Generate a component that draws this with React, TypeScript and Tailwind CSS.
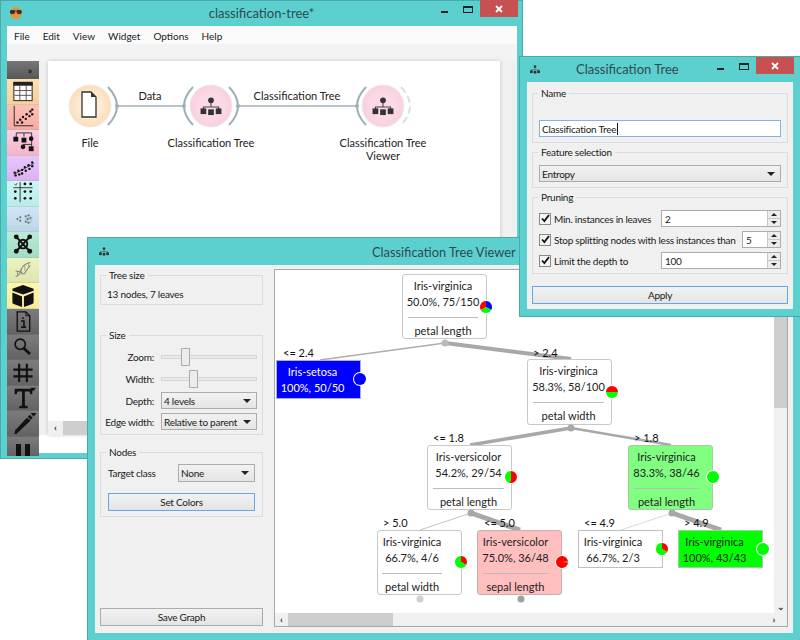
import type { ReactNode } from "react";

const TEAL = "bg-[#5cd0cf]";

// small org-chart glyph used in window titles and widget circles
function TreeGlyph({ className }: { className: string }) {
  return (
    <svg className={className} viewBox="0 0 24 20" fill="#333">
      <circle cx="12" cy="3.5" r="3" />
      <path d="M12 5v6M4 13v-2.5h16V13" stroke="#444" strokeWidth="1.1" fill="none" />
      <rect x="1" y="12" width="6" height="6" />
      <rect x="9" y="13" width="6" height="6" />
      <rect x="17" y="12" width="6" height="6" />
    </svg>
  );
}

function WinControls() {
  return (
    <div className="flex h-[18px] items-start">
      <div className="mt-[11px] h-[2px] w-[7px] bg-[#222]" />
      <div className="ml-[15px] mt-[6px] h-[7px] w-[10px] border border-t-2 border-[#222]" />
      <div className="ml-[7px] flex h-[17px] w-[38px] items-center justify-center bg-[#c75050]">
        <svg className="h-[8px] w-[8px]" viewBox="0 0 8 8" stroke="#fff" strokeWidth="1.8">
          <path d="M1 1l6 6M7 1L1 7" />
        </svg>
      </div>
    </div>
  );
}

function Group({ label, className, children }: { label: string; className: string; children?: ReactNode }) {
  return (
    <div className={`relative border border-[#dcdcdc] ${className}`}>
      <span className="absolute left-[5px] top-[-8px] bg-[#f0f0f0] px-[3px] text-[#1a1a1a]">{label}</span>
      {children}
    </div>
  );
}

function Select({ value, className }: { value: string; className: string }) {
  return (
    <div className={`flex items-center justify-between whitespace-nowrap border border-[#acacac] bg-linear-to-b from-[#f2f2f2] to-[#e4e4e4] pl-[2px] pr-[5px] text-[#1a1a1a] ${className}`}>
      <span>{value}</span>
      <span className="h-0 w-0 border-x-[4px] border-t-[4px] border-x-transparent border-t-[#222]" />
    </div>
  );
}

function Button({ label, focus, className }: { label: string; focus?: boolean; className: string }) {
  return (
    <div className={`flex items-center justify-center border bg-linear-to-b from-[#f2f2f2] to-[#e4e4e4] text-[#1a1a1a] ${focus ? "border-[#64a8ea]" : "border-[#acacac]"} ${className}`}>
      {label}
    </div>
  );
}

function Slider({ handle }: { handle: string }) {
  return (
    <div className="relative h-[18px] w-[96px]">
      <div className="absolute left-0 right-0 top-[7px] h-[4px] border border-[#d6d6d6] bg-[#e9e9e9]" />
      <div className={`absolute top-0 h-[18px] w-[9px] border border-[#acacac] bg-[#ececec] ${handle}`} />
    </div>
  );
}

function Check({ label }: { label: string }) {
  return (
    <div className="flex items-center whitespace-nowrap">
      <div className="flex h-[12px] w-[12px] items-center justify-center border border-[#8a8a8a] bg-[#f4f4f4]">
        <svg className="h-[9px] w-[9px]" viewBox="0 0 9 9" fill="none" stroke="#111" strokeWidth="1.8">
          <path d="M1 4.5l2.4 2.6L8 1" />
        </svg>
      </div>
      <span className="ml-[3px] text-[#1a1a1a]">{label}</span>
    </div>
  );
}

function Spin({ value, className }: { value: string; className: string }) {
  return (
    <div className={`flex h-[17px] items-stretch border border-[#acacac] bg-white pl-[3px] text-[#1a1a1a] ${className}`}>
      <span className="flex-1 leading-[16px]">{value}</span>
      <div className="flex w-[13px] flex-col border-l border-[#c8c8c8] bg-[#ededed]">
        <div className="flex flex-1 items-center justify-center border-b border-[#c8c8c8]">
          <span className="h-0 w-0 border-x-[3px] border-b-[3px] border-x-transparent border-b-[#222]" />
        </div>
        <div className="flex flex-1 items-center justify-center">
          <span className="h-0 w-0 border-x-[3px] border-t-[3px] border-x-transparent border-t-[#222]" />
        </div>
      </div>
    </div>
  );
}

/* ---- toolbox icons ---- */
const dots = (pts: number[][], r = 1.6) => pts.map(([x, y], i) => <circle key={i} cx={x} cy={y} r={r} />);

const toolIcons: ReactNode[] = [
  <g key="table">
    <rect x="6.5" y="3.5" width="19" height="19" fill="#fff" stroke="#222" />
    <rect x="6" y="3" width="20" height="4" fill="#222" />
    <path d="M12.7 7v15M19.3 7v15M7 12h18M7 17h18" stroke="#555" />
  </g>,
  <g key="scatter">
    <path d="M6.500 1v21.500H27" fill="none" stroke="#222" strokeWidth="1" />
    {dots([[10, 19], [13, 16], [15, 19], [16, 13], [19, 15], [20, 10], [23, 12], [24, 7], [26, 10], [26, 5]], 1.3)}
  </g>,
  <g key="tree">
    <path d="M9 7V3h16v4M17 3v4M25 7v8M16 15h9v3" fill="none" stroke="#333" strokeWidth="1" />
    <rect x="6" y="7" width="5" height="5" />
    <rect x="14.500" y="8" width="5" height="5" />
    <circle cx="24.500" cy="9" r="2.400" />
    <circle cx="16" cy="17.500" r="2.400" />
    <rect x="22" y="17" width="5" height="5" />
  </g>,
  <g key="regress">
    <path d="M6 20L28 8" stroke="#222" strokeWidth="0.8" />
    {dots([[7, 18], [8, 21], [11, 16], [12, 20], [15, 15], [15, 19], [18, 12], [19, 16], [22, 10], [23, 14], [26, 7], [26, 11]], 1.3)}
  </g>,
  <g key="matrix">
    <path d="M6 7h20M13 1v21" stroke="#222" strokeWidth="0.9" />
    {dots([[18, 3], [24, 3], [18, 11], [24, 11], [18, 18], [24, 18], [8, 11], [8, 18]], 1.4)}
    <path d="M7 3l1.500 1.500L10 2" fill="none" stroke="#222" strokeWidth="0.7" />
  </g>,
  <g key="cluster" opacity="0.55">
    <circle cx="22" cy="13" r="4.500" fill="#9aa" opacity="0.5" />
    {dots([[10, 13], [13, 11], [13, 15], [19, 10], [22, 9], [21, 13], [24, 12], [19, 16], [22, 17]], 1.100)}
  </g>,
  <g key="network">
    <path d="M9 5l14 15M23 5L9 20" stroke="#111" strokeWidth="2" />
    <circle cx="16" cy="12.500" r="4.500" fill="none" stroke="#111" strokeWidth="2" />
    {dots([[9, 5], [23, 5], [9, 20], [23, 20]], 2.500)}
  </g>,
  <g key="dna" fill="none" stroke="#777" strokeWidth="1.100" opacity="0.85">
    <path d="M8 20c6-1 5-9 9-12s6-3 7-3" />
    <path d="M8 14c4 0 6 1 8 3s4-6 8-9" />
    <path d="M10 14v5M14 11v7M18 7v7M22 5v4" strokeWidth="0.800" />
  </g>,
  <g key="cube">
    <path d="M16 2l11 4v2l-11 4L5 8V6z" />
    <path d="M5 10l10 4v11L7 22c-1.500-.5-2-1-2-2zM27 10l-10 4v11l8-3c1.500-.5 2-1 2-2z" />
  </g>,
  <g key="info">
    <path d="M10 3h9l4 4v16H10z" fill="none" stroke="#111" strokeWidth="1.400" />
    <path d="M19 3v4h4" fill="none" stroke="#111" />
    <path d="M16 8.500v2M14 12.500h3v6h1.500M14 19h5" fill="none" stroke="#111" strokeWidth="1.600" />
  </g>,
  <g key="search" fill="none" stroke="#111">
    <circle cx="13" cy="10" r="5.500" strokeWidth="1.800" />
    <path d="M17 14.500l6.500 6" strokeWidth="3" />
  </g>,
  <g key="hash" stroke="#111" strokeWidth="2.200">
    <path d="M12 4v19M20 4v19M6 10h20M6 17h20" />
  </g>,
  <g key="text">
    <path d="M7 3h19v6h-2l-1-3h-5v15l3 1v2H12v-2l3-1V6h-5L9 9H7z" />
    <path d="M30 2h-6l3 4z" />
  </g>,
  <g key="pen">
    <path d="M9 24l-2 0 1-4L20 7l4 3z" />
    <path d="M21 6l2-2 3 3-2 2z" />
    <path d="M30 2h-6l3 4z" />
  </g>,
];

const toolRows = [
  { bg: "from-[#fde0b4] to-[#f9cf98]", h: "h-[26px]" },
  { bg: "from-[#fdc0b6] to-[#f8aaa3]", h: "h-[25px]" },
  { bg: "from-[#fdcfe2] to-[#f5b3cb]", h: "h-[26px]" },
  { bg: "from-[#e7c6fa] to-[#dcb2f2]", h: "h-[25px]" },
  { bg: "from-[#ccf7f2] to-[#b8ecea]", h: "h-[26px]" },
  { bg: "from-[#d0e6f6] to-[#bdd6e6]", h: "h-[25px]" },
  { bg: "from-[#b9ecd8] to-[#a2dcc4]", h: "h-[26px]" },
  { bg: "from-[#ecf3c0] to-[#dde6ae]", h: "h-[25px]" },
  { bg: "from-[#fdf6ae] to-[#f7ec98]", h: "h-[26px]" },
  { bg: "from-[#7c7c7c] to-[#636363]", h: "h-[26px]" },
  { bg: "from-[#7c7c7c] to-[#636363]", h: "h-[25px]" },
  { bg: "from-[#7c7c7c] to-[#636363]", h: "h-[26px]" },
  { bg: "from-[#7c7c7c] to-[#636363]", h: "h-[25px]" },
  { bg: "from-[#7c7c7c] to-[#636363]", h: "h-[26px]" },
];

function Toolbox() {
  return (
    <div className="flex h-full w-[32px] flex-col overflow-hidden">
      <div className="flex h-[18px] shrink-0 items-center justify-end bg-linear-to-b from-[#777] to-[#585858] pr-[7px] text-[9px] font-bold leading-none text-[#111]">»</div>
      {toolRows.map((row, i) => (
        <div key={i} className={`shrink-0 border-b border-[#0000001f] bg-linear-to-b ${row.bg} ${row.h}`}>
          <svg className="h-full w-full" viewBox="0 0 32 26" fill="#111">{toolIcons[i]}</svg>
        </div>
      ))}
      <div className="flex flex-1 justify-center gap-[4px] bg-linear-to-b from-[#7c7c7c] to-[#636363] pt-[7px]">
        <div className="h-[12px] w-[5px] bg-[#111]" />
        <div className="h-[12px] w-[5px] bg-[#111]" />
      </div>
    </div>
  );
}

/* ---- workflow canvas (free canvas, coordinates are the content) ---- */
function WidgetNode({ cx, fill, inner }: { cx: number; fill: string; inner: string }) {
  return (
    <g>
      <defs>
        <radialGradient id={`w${cx}`}>
          <stop offset="0.55" stopColor={inner} />
          <stop offset="1" stopColor={fill} />
        </radialGradient>
      </defs>
      <circle cx={cx} cy="45" r="21" fill={`url(#w${cx})`} stroke="#ececec" strokeWidth="1" />
    </g>
  );
}

function Workflow() {
  const arcL = (x: number) => `M${x + 9} 26q-18 19 0 38`;
  const arcR = (x: number) => `M${x - 9} 26q18 19 0 38`;
  return (
    <div className="relative h-[374px] w-[452px] bg-white shadow-[0_0_4px_#0003]">
      <svg className="absolute inset-0" width="452" height="374" viewBox="0 0 452 374" fill="none">
        <path d="M70 45H136M190 45H310" stroke="#a3b3ba" strokeWidth="1.500" />
        <WidgetNode cx={42} fill="#fcdcb6" inner="#fdebd5" />
        <WidgetNode cx={163} fill="#f9cfdf" inner="#fbd9e6" />
        <WidgetNode cx={335} fill="#f9cfdf" inner="#fbd9e6" />
        <g stroke="#9db0b8" strokeWidth="2">
          <path d={arcR(69)} />
          <path d={arcL(136)} />
          <path d={arcR(190)} />
          <path d={arcL(309)} />
        </g>
        <g fill="#9db0b8">
          <circle cx="69" cy="45" r="2" />
          <circle cx="136" cy="45" r="2" />
          <circle cx="190" cy="45" r="2" />
          <circle cx="309" cy="45" r="2" />
        </g>
        <path d={arcR(362)} stroke="#d6e0e4" strokeWidth="2" strokeDasharray="7 4" />
        <path d="M34 31h9l5 5v20H34z" fill="#fff" stroke="#333" strokeWidth="1.300" />
        <path d="M43 31v5h5z" fill="#333" />
      </svg>
      <TreeGlyph className="absolute left-[151px] top-[36px] h-[19px] w-[24px]" />
      <TreeGlyph className="absolute left-[323px] top-[36px] h-[19px] w-[24px]" />
      <span className="absolute left-[84px] top-[28px] w-[36px] text-center">Data</span>
      <span className="absolute left-[189px] top-[28px] w-[120px] text-center">Classification Tree</span>
      <span className="absolute left-[12px] top-[75px] w-[60px] text-center">File</span>
      <span className="absolute left-[103px] top-[75px] w-[120px] text-center">Classification Tree</span>
      <span className="absolute left-[275px] top-[75px] w-[120px] text-center leading-[13px]">Classification Tree Viewer</span>
      <div className="absolute bottom-0 left-0 flex h-[14px] w-full bg-[#f0f0f0]">
        <span className="w-[15px] text-center text-[10px] font-bold leading-[13px] text-[#333]">‹</span>
        <div className="flex-1 bg-[#cdcdcd]" />
      </div>
    </div>
  );
}

/* ---- tree viewer ---- */
type Slice = [string, number];

function Pie({ slices, start = -90, cx, cy }: { slices: Slice[]; start?: number; cx: number; cy: number }) {
  let a = start;
  return (
    <g>
      <circle cx={cx} cy={cy} r="7" fill="#fff" />
      {slices.map(([color, deg], i) => {
        if (deg >= 360) return <circle key={i} cx={cx} cy={cy} r="6" fill={color} />;
        const a0 = (a * Math.PI) / 180;
        a += deg;
        const a1 = (a * Math.PI) / 180;
        const d = `M${cx} ${cy}L${cx + 6 * Math.cos(a0)} ${cy + 6 * Math.sin(a0)}A6 6 0 ${deg > 180 ? 1 : 0} 1 ${cx + 6 * Math.cos(a1)} ${cy + 6 * Math.sin(a1)}Z`;
        return <path key={i} d={d} fill={color} />;
      })}
    </g>
  );
}

const nodes = [
  { pos: "left-[127px] top-[4px] h-[65px] pl-[5px] pr-[8px] rounded-[3px] bg-white border-[#c8c8c8]", lines: ["Iris-virginica", "50.0%, 75/150"], attr: "petal length" },
  { pos: "left-[1px] top-[90px] h-[39px] pl-[5px] pr-[17px] bg-[#0000ff] border-[#aaaaee] text-white", lines: ["Iris-setosa", "100%, 50/50"] },
  { pos: "left-[252px] top-[89px] h-[66px] pl-[5px] pr-[7px] rounded-[3px] bg-white border-[#c8c8c8]", lines: ["Iris-virginica", "58.3%, 58/100"], attr: "petal width" },
  { pos: "left-[152px] top-[175px] h-[65px] pl-[5px] pr-[7px] rounded-[3px] bg-white border-[#c8c8c8]", lines: ["Iris-versicolor", "54.2%, 29/54"], attr: "petal length" },
  { pos: "left-[353px] top-[175px] h-[65px] pl-[5px] pr-[13px] rounded-[3px] bg-[#80ff80] border-[#a8c8a8]", lines: ["Iris-virginica", "83.3%, 38/46"], attr: "petal length" },
  { pos: "left-[102px] top-[260px] h-[65px] pl-[4px] pr-[19px] rounded-[3px] bg-white border-[#c8c8c8]", lines: ["Iris-virginica", "66.7%, 4/6"], attr: "petal width" },
  { pos: "left-[202px] top-[260px] h-[65px] pl-[5px] pr-[13px] rounded-[3px] bg-[#ffbfbf] border-[#c8b0b0]", lines: ["Iris-versicolor", "75.0%, 36/48"], attr: "sepal length" },
  { pos: "left-[303px] top-[260px] h-[38px] pl-[4px] pr-[19px] bg-white border-[#c0c0c0]", lines: ["Iris-virginica", "66.7%, 2/3"] },
  { pos: "left-[403px] top-[260px] h-[38px] pl-[5px] pr-[17px] bg-[#00ff00] border-[#a8c8a8]", lines: ["Iris-virginica", "100%, 43/43"] },
];

const edgeLabels = [
  { text: "<= 2.4", pos: "left-[8px] top-[76px]" },
  { text: "> 2.4", pos: "left-[258px] top-[76px]" },
  { text: "<= 1.8", pos: "left-[158px] top-[161px]" },
  { text: "> 1.8", pos: "left-[359px] top-[161px]" },
  { text: "> 5.0", pos: "left-[108px] top-[246px]" },
  { text: "<= 5.0", pos: "left-[209px] top-[246px]" },
  { text: "<= 4.9", pos: "left-[309px] top-[246px]" },
  { text: "> 4.9", pos: "left-[409px] top-[246px]" },
];

const edges = [
  { d: "M170 73L45 90", w: 1.5, c: "#adadad" },
  { d: "M170 73L296 89", w: 4, c: "#a8a8a8" },
  { d: "M296 158L195 175", w: 3.5, c: "#a8a8a8" },
  { d: "M296 158L396 175", w: 2.500, c: "#a8a8a8" },
  { d: "M196 243L145 260", w: 1, c: "#c4c4c4" },
  { d: "M196 243L245 260", w: 5, c: "#a8a8a8" },
  { d: "M397 243L346 260", w: 1, c: "#dadada" },
  { d: "M397 243L446 260", w: 5, c: "#a8a8a8" },
];

function TreeCanvas() {
  return (
    <div className="relative flex-1 overflow-hidden bg-white">
      <svg className="absolute inset-0" width="512" height="344" viewBox="0 0 512 344">
        {edges.map((e, i) => (
          <path key={i} d={e.d} stroke={e.c} strokeWidth={e.w} />
        ))}
      </svg>
      {edgeLabels.map((l) => (
        <span key={l.pos} className={`absolute leading-[13px] text-[#111] ${l.pos}`}>{l.text}</span>
      ))}
      {nodes.map((n) => (
        <div key={n.pos} className={`absolute flex w-[85px] flex-col items-center whitespace-nowrap border ${n.pos}`}>
          <span className="mt-[3px] leading-[16px]">{n.lines[0]}</span>
          <span className="leading-[16px]">{n.lines[1]}</span>
          {n.attr && <div className="mt-[7px] h-px w-full shrink-0 bg-[#bbb]" />}
          {n.attr && <span className="mt-[6px] leading-[14px]">{n.attr}</span>}
        </div>
      ))}
      <svg className="absolute inset-0" width="512" height="344" viewBox="0 0 512 344">
        <Pie cx={211} cy={37} start={-90} slices={[["#0000ff", 120], ["#00ff00", 120], ["#ff0000", 120]]} />
        <circle cx="170" cy="73" r="3.500" fill="#bcbcbc" />
        <Pie cx={85} cy={109} slices={[["#0000ff", 360]]} />
        <Pie cx={337} cy={122} start={0} slices={[["#00ff00", 180], ["#ff0000", 180]]} />
        <circle cx="296" cy="158" r="3.500" fill="#a8a8a8" />
        <Pie cx={236} cy={207} start={-90} slices={[["#ff0000", 190], ["#00ff00", 170]]} />
        <circle cx="196" cy="243" r="3.500" fill="#a8a8a8" />
        <Pie cx={438} cy={207} slices={[["#00ff00", 360]]} />
        <circle cx="397" cy="243" r="3.500" fill="#a8a8a8" />
        <Pie cx={186} cy={292} start={-90} slices={[["#ff0000", 120], ["#00ff00", 240]]} />
        <circle cx="145" cy="329" r="3.500" fill="#d0d0d0" />
        <Pie cx={287} cy={292} start={-5} slices={[["#00ff00", 10], ["#ff0000", 350]]} />
        <circle cx="246" cy="329" r="3.500" fill="#a0a0a0" />
        <Pie cx={387} cy={279} start={-90} slices={[["#ff0000", 120], ["#00ff00", 240]]} />
        <Pie cx={488} cy={279} slices={[["#00ff00", 360]]} />
      </svg>
    </div>
  );
}

function ViewerWindow() {
  return (
    <div className={`absolute left-[88px] top-[238px] z-10 flex h-[402px] w-[712px] flex-col shadow-[0_0_0_1px_#4aa9a9] ${TEAL}`}>
      <div className="flex h-[27px] shrink-0 items-center pl-[10px]">
        <TreeGlyph className="h-[9px] w-[12px]" />
        <span className="ml-[262px] pt-[1px] text-[12.800px] text-[#2c4a50]">Classification Tree Viewer</span>
      </div>
      <div className="mx-[7px] mb-[7px] flex flex-1 bg-[#f0f0f0]">
        <div className="flex w-[179px] shrink-0 flex-col pb-[7px] pl-[5px] pr-[11px] text-[10px] tracking-[-0.25px] text-[#1a1a1a]">
          <Group label="Tree size" className="mt-[10px] h-[30px]">
            <span className="absolute left-[6px] top-[11px]">13 nodes, 7 leaves</span>
          </Group>
          <Group label="Size" className="mt-[30px] flex h-[100px] flex-col pt-[12px]">
            <div className="flex h-[18px] items-center">
              <span className="w-[53px] text-right">Zoom:</span>
              <div className="ml-[7px]"><Slider handle="left-[20px]" /></div>
            </div>
            <div className="mt-[4px] flex h-[18px] items-center">
              <span className="w-[53px] text-right">Width:</span>
              <div className="ml-[7px]"><Slider handle="left-[28px]" /></div>
            </div>
            <div className="mt-[4px] flex h-[17px] items-center">
              <span className="w-[53px] text-right">Depth:</span>
              <Select value="4 levels" className="ml-[7px] h-[17px] w-[96px]" />
            </div>
            <div className="mt-[4px] flex h-[17px] items-center">
              <span className="w-[53px] whitespace-nowrap text-right">Edge width:</span>
              <Select value="Relative to parent" className="ml-[7px] h-[17px] w-[96px]" />
            </div>
          </Group>
          <Group label="Nodes" className="mt-[17px] flex h-[65px] flex-col px-[7px] pt-[11px]">
            <div className="flex items-center justify-between">
              <span>Target class</span>
              <Select value="None" className="h-[18px] w-[77px]" />
            </div>
            <Button label="Set Colors" focus className="mt-[11px] h-[18px]" />
          </Group>
          <Button label="Save Graph" className="mt-auto h-[18px]" />
        </div>
        <div className="mb-[6px] mr-[5px] mt-[4px] flex flex-1 flex-col border border-[#a8a8a8]">
          <div className="flex min-h-0 flex-1">
            <TreeCanvas />
            <div className="flex w-[13px] flex-col bg-[#f0f0f0]">
              <div className="h-[138px] bg-[#cdcdcd]" />
              <span className="mt-auto text-center text-[9px] font-bold leading-[13px] text-[#444]">⌄</span>
            </div>
          </div>
          <div className="flex h-[13px] shrink-0 bg-[#f0f0f0]">
            <span className="w-[13px] text-center text-[10px] font-bold leading-[12px] text-[#333]">‹</span>
            <div className="w-[105px] bg-[#cdcdcd]" />
            <span className="ml-auto w-[26px] text-center text-[10px] font-bold leading-[12px] text-[#333]">›</span>
          </div>
        </div>
      </div>
    </div>
  );
}

function ConfigWindow() {
  return (
    <div className={`absolute left-[520px] top-[57px] z-20 flex h-[259px] w-[280px] flex-col shadow-[0_0_0_1px_#4aa9a9] ${TEAL}`}>
      <div className="flex h-[25px] shrink-0 items-start pl-[9px] pr-[6px]">
        <TreeGlyph className="mt-[8px] h-[9px] w-[12px]" />
        <span className="ml-[35px] mt-[5px] flex-1 text-[13px] text-[#2c4a50]">Classification Tree</span>
        <WinControls />
      </div>
      <div className="mx-[7px] mb-[7px] flex flex-1 flex-col bg-[#f0f0f0] px-[5px] text-[10px] tracking-[-0.25px] text-[#1a1a1a]">
        <Group label="Name" className="mt-[11px] h-[50px] shrink-0 px-[6px] pt-[26px]">
          <div className="flex h-[17px] items-center border border-[#7eb4ea] bg-white pl-[2px]">
            Classification Tree<span className="ml-px h-[12px] w-px bg-[#111]" />
          </div>
        </Group>
        <Group label="Feature selection" className="mt-[9px] h-[36px] shrink-0 px-[6px] pt-[12px]">
          <Select value="Entropy" className="h-[17px]" />
        </Group>
        <Group label="Pruning" className="mt-[9px] h-[77px] shrink-0 px-[6px] pt-[12px]">
          <div className="flex items-center justify-between">
            <Check label="Min. instances in leaves" />
            <Spin value="2" className="w-[120px]" />
          </div>
          <div className="mt-[4px] flex items-center justify-between">
            <Check label="Stop splitting nodes with less instances than" />
            <Spin value="5" className="w-[39px]" />
          </div>
          <div className="mt-[4px] flex items-center justify-between">
            <Check label="Limit the depth to" />
            <Spin value="100" className="w-[120px]" />
          </div>
        </Group>
        <Button label="Apply" focus className="mt-[12px] h-[18px]" />
      </div>
    </div>
  );
}

function MainWindow() {
  return (
    <div className={`absolute left-0 top-0 flex h-[459px] w-[523px] flex-col shadow-[inset_0_0_0_1px_#4aa9a9] ${TEAL}`}>
      <div className="flex h-[26px] shrink-0 items-start pl-[9px] pr-[5px]">
        <svg className="mt-[7px] h-[12px] w-[14px]" viewBox="0 0 14 12">
          <circle cx="7" cy="6" r="6" fill="#e8913a" />
          <rect x="1" y="3" width="5" height="4" rx="1.500" fill="#333" />
          <rect x="8" y="3" width="5" height="4" rx="1.500" fill="#333" />
          <path d="M5 4h4" stroke="#333" />
        </svg>
        <span className="ml-[186px] mt-[6px] w-[237px] text-[13px] text-[#2c4a50]">classification-tree*</span>
        <WinControls />
      </div>
      <div className="mx-[7px] mb-[6px] mr-[6px] flex h-[427px] flex-col bg-white">
        <div className="flex h-[18px] shrink-0 items-center gap-[13px] bg-[#fafafa] px-[7px] pt-[1px] text-[10px] text-[#1a1a1a]">
          <span>File</span>
          <span>Edit</span>
          <span>View</span>
          <span>Widget</span>
          <span>Options</span>
          <span>Help</span>
        </div>
        <div className="flex flex-1 flex-col">
          <div className="h-[17px] shrink-0 bg-[#f3f3f3]" />
          <div className="flex flex-1">
            <Toolbox />
            <div className="flex-1">
              <div className="bg-[#f0f0f0] pl-[9px] pr-[17px]">
                <Workflow />
              </div>
            </div>
          </div>
        </div>
      </div>
    </div>
  );
}

export default function App() {
  return (
    <div className="relative h-[640px] w-[800px] overflow-hidden bg-white font-[Lato,sans-serif] text-[11px] leading-[14px] text-[#222]">
      <MainWindow />
      <ViewerWindow />
      <ConfigWindow />
    </div>
  );
}
